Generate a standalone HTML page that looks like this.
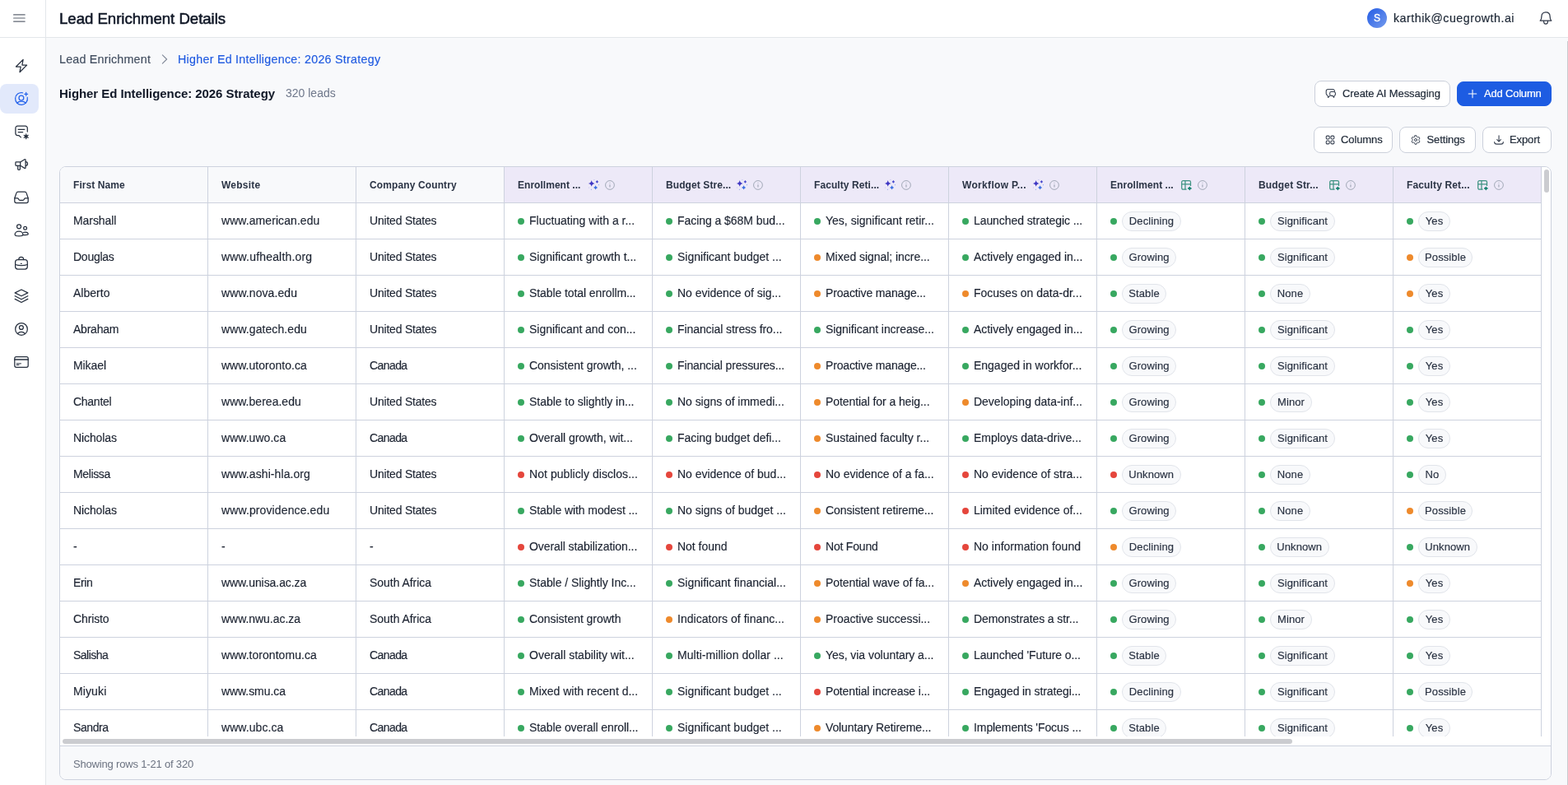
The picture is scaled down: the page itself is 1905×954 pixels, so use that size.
<!DOCTYPE html>
<html lang="en">
<head>
<meta charset="utf-8">
<title>Lead Enrichment Details</title>
<style>
*{box-sizing:border-box;margin:0;padding:0}
html,body{width:1905px;height:954px;overflow:hidden}
body{position:relative;background:#f8f9fb;font-family:"Liberation Sans",sans-serif;color:#1f2937;font-size:14px}
svg{display:block}
.sidebar,.topbar,.main{will-change:transform}
.sidebar{position:absolute;left:0;top:0;width:56px;height:954px;background:#fff;border-right:1px solid #e3e6ea;z-index:3}
.burger{position:absolute;left:0;top:0;width:55px;height:46px;border-bottom:1px solid #e3e6ea}
.burger svg{position:absolute;left:16px;top:14px}
.nav-item{position:absolute;left:0;width:47px;height:36px;border-radius:8px;display:block}
.nav-item svg{position:absolute;left:16px;top:8px}
.nav-item.active{background:#e2e9fb}
.topbar{position:absolute;left:56px;top:0;width:1849px;height:46px;background:#fff;border-bottom:1px solid #e3e6ea;z-index:2}
.topbar h1{position:absolute;left:16px;top:12px;font-size:18.6px;line-height:22px;font-weight:400;-webkit-text-stroke:0.55px #111827;color:#111827;white-space:nowrap;letter-spacing:-0.02px}
.user{position:absolute;left:1605px;top:10px;height:24px;white-space:nowrap}
.avatar{position:absolute;left:0;top:0;width:24px;height:24px;border-radius:50%;background:linear-gradient(135deg,#2b62e6 10%,#7198ec 95%);color:#fff;font-size:12px;line-height:24px;text-align:center;-webkit-text-stroke:0.35px #fff}
.email{position:absolute;left:32px;top:3px;font-size:14.2px;line-height:18px;color:#1f2937;letter-spacing:0.52px;-webkit-text-stroke:0.2px #1f2937}
.bell{position:absolute;left:1812px;top:12px}
.main{position:absolute;left:56px;top:46px;width:1849px;height:908px}
.crumbs{position:absolute;left:16px;top:16px;height:20px;white-space:nowrap;font-size:14.3px;line-height:20px}
.crumbs .c1{position:absolute;left:0;top:0;color:#414d5f;letter-spacing:0.2px;-webkit-text-stroke:0.15px #414d5f}
.crumbs svg{position:absolute;left:121px;top:3.4px}
.crumbs .c2{position:absolute;left:144px;top:0;color:#1f5ae0;letter-spacing:0.256px;-webkit-text-stroke:0.15px #1f5ae0}
.titlerow{position:absolute;left:16px;top:57px;height:22px;white-space:nowrap}
.titlerow h2{position:absolute;left:0;top:0;font-size:15px;line-height:22px;font-weight:700;color:#111827;letter-spacing:-0.06px}
.titlerow .count{position:absolute;left:275px;top:0;font-size:14px;line-height:20px;color:#6f788b}
.btn{position:absolute;height:32px;border:1px solid #cbd0db;border-radius:8px;background:#fff;font-family:inherit;font-size:13px;color:#1f2937;white-space:nowrap;text-align:left}
.btn svg{position:absolute;top:8px;left:12px}
.btn span{position:absolute;top:7px;left:33px;line-height:15px;letter-spacing:-0.1px;-webkit-text-stroke:0.2px currentColor}
.btn.primary{background:#1d5ce2;border-color:#1d5ce2;color:#fff}
.b-msg{left:1541px;top:52px;width:165px}
.b-add{left:1714px;top:53px;width:115px;height:30px}
.b-add span{left:32px;top:6px;letter-spacing:-0.2px}
.b-add svg{top:7px;left:11px}
.b-col{left:1540px;top:108px;width:96px}
.b-col span{left:32px}
.b-set{left:1644px;top:108px;width:93px}
.b-set span{left:32.5px}
.b-exp{left:1745px;top:108px;width:84px}
.b-exp span{left:32px}
.card{position:absolute;left:16px;top:156px;width:1813px;height:746px;border:1px solid #cdd2de;border-radius:8px;background:#f8f9fb;overflow:hidden}
.scroll{position:absolute;left:0;top:0;width:1811px;height:703px;background:#fff}
.view{position:absolute;left:0;top:0;width:1800px;height:692px;overflow:hidden}
table{border-collapse:separate;border-spacing:0;table-layout:fixed;width:1800px}
th,td{width:180px;height:44px;border-right:1px solid #cdd2de;border-bottom:1px solid #cdd2de;padding:13px 0 0 16px;text-align:left;vertical-align:top;white-space:nowrap;overflow:hidden;position:relative;line-height:17px}
th{background:#f8f9fb;font-size:12px;font-weight:700;color:#2b3445;padding-top:15px;line-height:15px}
th.ai{background:#ede9f8}
th svg{position:absolute}
th .i1{left:101px;top:14px}
th .i2{left:121px;top:15px}
th.tb .i1{left:101px;top:15px}
td{background:#fff;font-size:14px;color:#1c2331;-webkit-text-stroke:0.15px #1c2331}
.dot{position:absolute;left:16px;top:18px;width:8px;height:8px;border-radius:50%}
.dot.g{background:#38a860}.dot.o{background:#ee8a2c}.dot.r{background:#e5463c}
.tx{position:absolute;left:30px;top:13px;line-height:17px}
.pill{position:absolute;left:30px;top:10px;height:24px;line-height:21px;border:1px solid #e1e4ea;border-radius:12px;background:#f8f9fb;font-size:13px;color:#2b3445;text-align:center;letter-spacing:0.1px}
.w-Declining{width:72px}.w-Growing{width:66px}.w-Stable{width:54px}.w-Unknown{width:71.5px}
.w-Significant{width:79px}.w-None{width:49px}.w-Minor{width:51px}
.w-Yes{width:39px}.w-No{width:33.7px}.w-Possible{width:66px}
.vthumb{position:absolute;left:1803px;top:3px;width:6px;height:28px;border-radius:3px;background:#cbccd0}
.hthumb{position:absolute;left:3px;top:695px;width:1494px;height:6px;border-radius:3px;background:#cbccd0}
.foot{position:absolute;left:0;top:703px;width:1811px;height:41px;border-top:1px solid #cdd2de;background:#f8f9fb;padding:14px 0 0 16px;font-size:13px;line-height:15px;color:#6b7280;letter-spacing:-0.18px}
.pagescroll{position:absolute;left:1904px;top:50px;width:1px;height:904px;background:#c9cace;z-index:5}
</style>
</head>
<body>
<aside class="sidebar">
<div class="burger"><svg width="16" height="16" viewBox="0 0 16 16" fill="none" stroke="#5f6673" stroke-width="1.2" stroke-linecap="round" stroke-linejoin="round" ><path d="M.6 3.9h13.6M.6 8h13.6M.6 12.1h13.6"/></svg></div>
<nav>
<a class="nav-item" style="top:62px" title="Dashboard"><svg width="20" height="20" viewBox="0 0 20 20" fill="none" stroke="#27303f" stroke-width="1.25" stroke-linecap="round" stroke-linejoin="round" ><path d="M12.1 2.4 3.5 11H9.2L8 17.7 16.6 9.1H10.9Z"/></svg></a>
<a class="nav-item active" style="top:102px" title="Lead Enrichment"><svg width="20" height="20" viewBox="0 0 20 20" fill="none" stroke="#2563eb" stroke-width="1.25" stroke-linecap="round" stroke-linejoin="round" ><path d="M17.24 8.46A7.4 7.4 0 1 1 11.54 2.76"/><circle cx="9.9" cy="9.1" r="2.9"/><path d="M4.7 15.3C6 13.9 7.8 13.2 10 13.2S14 13.9 15.3 15.3"/><path d="M15.7 2.4V6.2M13.8 4.3H17.6"/></svg></a>
<a class="nav-item" style="top:142px" title="Messaging"><svg width="20" height="20" viewBox="0 0 20 20" fill="none" stroke="#27303f" stroke-width="1.25" stroke-linecap="round" stroke-linejoin="round" ><path d="M17.3 10.1V5.7A2.5 2.5 0 0 0 14.8 3.2H5.4A2.5 2.5 0 0 0 2.9 5.7V12A2.5 2.5 0 0 0 5.4 14.5H6.8L9.4 16.9"/><path d="M6.2 7.45H13.8M6.2 10.5H11.7"/><circle cx="15.7" cy="15.8" r="1.9" fill="#27303f" stroke="none"/><path d="M15.7 12.9V18.7M13.2 14.35 18.2 17.25M13.2 17.25 18.2 14.35" stroke-width="1.2"/></svg></a>
<a class="nav-item" style="top:182px" title="Campaigns"><svg width="20" height="20" viewBox="0 0 20 20" fill="none" stroke="#27303f" stroke-width="1.25" stroke-linecap="round" stroke-linejoin="round" ><rect x="2.9" y="6.95" width="5.8" height="4.3" rx=".8"/><path d="M8.7 6.95 13.9 3.8A.8 .8 0 0 1 15.1 4.5V13.7A.8 .8 0 0 1 13.9 14.4L8.7 11.25"/><path d="M5.7 11.25V15.6A.8 .8 0 0 0 6.5 16.4H7.6A.8 .8 0 0 0 8.4 15.6V11.25"/><path d="M15.1 6.7C18.3 6.9 18.3 11.3 15.1 11.5"/></svg></a>
<a class="nav-item" style="top:222px" title="Inbox"><svg width="20" height="20" viewBox="0 0 20 20" fill="none" stroke="#27303f" stroke-width="1.25" stroke-linecap="round" stroke-linejoin="round" ><path d="M1.8 10.8 4 4.4A2 2 0 0 1 5.9 3H14.1A2 2 0 0 1 16 4.4L18.2 10.8V14.6A2 2 0 0 1 16.2 16.6H3.8A2 2 0 0 1 1.8 14.6Z"/><path d="M1.8 10.8H5.4C6.4 10.8 6.6 13.4 8.1 13.4H11.9C13.4 13.4 13.6 10.8 14.6 10.8H18.2"/></svg></a>
<a class="nav-item" style="top:262px" title="Contacts"><svg width="20" height="20" viewBox="0 0 20 20" fill="none" stroke="#27303f" stroke-width="1.25" stroke-linecap="round" stroke-linejoin="round" ><circle cx="7.05" cy="5.3" r="2.5"/><circle cx="14.6" cy="7.15" r="1.9"/><path d="M2.1 15C2.1 12.7 4.2 11 7 11S11.9 12.7 11.9 15C11.9 16.3 9.8 16.9 7 16.9S2.1 16.3 2.1 15Z"/><path d="M12.6 12.5C13.2 12.3 13.9 12.2 14.6 12.2 16.7 12.2 18.2 13.3 18.2 14.6 18.2 15.3 17 15.7 14.7 15.7H12"/></svg></a>
<a class="nav-item" style="top:302px" title="Jobs"><svg width="20" height="20" viewBox="0 0 20 20" fill="none" stroke="#27303f" stroke-width="1.25" stroke-linecap="round" stroke-linejoin="round" ><rect x="2.6" y="5.5" width="14.7" height="11.5" rx="3"/><path d="M6.8 5.5C6.8 3.4 8 2.4 9.75 2.4S12.7 3.4 12.7 5.5"/><path d="M2.6 11.5C6.5 13.1 13.4 13.1 17.3 11.5"/><path d="M9.4 10.3H10.2"/></svg></a>
<a class="nav-item" style="top:342px" title="Layers"><svg width="20" height="20" viewBox="0 0 20 20" fill="none" stroke="#27303f" stroke-width="1.25" stroke-linecap="round" stroke-linejoin="round" ><path d="M10 2 2.2 5.9 10 9.8 17.8 5.9Z"/><path d="M2.2 9.7 10 13.8 17.8 9.7"/><path d="M2.2 13.4 10 17.5 17.8 13.4"/></svg></a>
<a class="nav-item" style="top:382px" title="Account"><svg width="20" height="20" viewBox="0 0 20 20" fill="none" stroke="#27303f" stroke-width="1.25" stroke-linecap="round" stroke-linejoin="round" ><circle cx="10" cy="9.9" r="7.35"/><circle cx="9.9" cy="8" r="2.45"/><path d="M5.4 15.5C6.5 14.1 8 13.3 9.9 13.3S13.3 14.1 14.4 15.5"/></svg></a>
<a class="nav-item" style="top:422px" title="Billing"><svg width="20" height="20" viewBox="0 0 20 20" fill="none" stroke="#27303f" stroke-width="1.25" stroke-linecap="round" stroke-linejoin="round" ><rect x="1.8" y="3.6" width="16.4" height="12.7" rx="2"/><path d="M1.8 7H18.2" stroke-width="1.7"/><path d="M4.2 11.85H9.5M4.2 13.4H7" stroke-width="1"/></svg></a>
</nav>
</aside>
<header class="topbar">
<h1>Lead Enrichment Details</h1>
<div class="user"><span class="avatar">S</span><span class="email">karthik@cuegrowth.ai</span></div>
<div class="bell"><svg width="20" height="20" viewBox="0 0 20 20" fill="none" stroke="#2f3747" stroke-width="1.25" stroke-linecap="round" stroke-linejoin="round" ><path d="M3.2 13.2C4.6 12 4.9 10.5 4.9 8 4.9 4.6 7 2.8 10 2.8S15.1 4.6 15.1 8C15.1 10.5 15.4 12 16.8 13.2Z"/><path d="M7.5 13.6C7.5 15.9 8.4 17.2 10 17.2S12.5 15.9 12.5 13.6"/></svg></div>
</header>
<main class="main">
<div class="crumbs"><span class="c1">Lead Enrichment</span><svg width="14" height="14" viewBox="0 0 14 14" fill="none" stroke="#858c9b" stroke-width="1.2" stroke-linecap="round" stroke-linejoin="round" ><path d="M4.4 1.9 9.6 7 4.4 12.1"/></svg><span class="c2">Higher Ed Intelligence: 2026 Strategy</span></div>
<div class="titlerow"><h2>Higher Ed Intelligence: 2026 Strategy</h2><span class="count">320 leads</span></div>
<button class="btn b-msg"><svg width="14" height="14" viewBox="0 0 14 14" fill="none" stroke="#3a4353" stroke-width="1.1" stroke-linecap="round" stroke-linejoin="round" ><path d="M11.4 4.3V3.8A2.3 2.3 0 0 0 9.1 1.5H3.5A2.3 2.3 0 0 0 1.2 3.8V6.8A2.3 2.3 0 0 0 3 9L3.5 11.5 5.5 9.6"/><path d="M7.4 4.55H10.6A1.8 1.8 0 0 1 12.4 6.35V7.6A1.8 1.8 0 0 1 11.2 9.3L10.6 11.4 9 9.4H7.4A1.8 1.8 0 0 1 5.65 7.6V6.35A1.8 1.8 0 0 1 7.4 4.55Z"/></svg><span>Create AI Messaging</span></button>
<button class="btn primary b-add"><svg width="14" height="14" viewBox="0 0 14 14" fill="none" stroke="#fff" stroke-width="1.05" stroke-linecap="round" stroke-linejoin="round" ><path d="M7 2.2v9.6M2.2 7h9.6"/></svg><span>Add Column</span></button>
<button class="btn b-col"><svg width="14" height="14" viewBox="0 0 14 14" fill="none" stroke="#3a4353" stroke-width="1.1" stroke-linecap="round" stroke-linejoin="round" ><rect x="2.25" y="2.15" width="3.9" height="3.9" rx="1.2"/><rect x="7.95" y="2.15" width="3.9" height="3.9" rx="1.2"/><rect x="2.25" y="7.95" width="3.9" height="3.9" rx="1.2"/><rect x="7.95" y="7.95" width="3.9" height="3.9" rx="1.2"/></svg><span>Columns</span></button>
<button class="btn b-set"><svg width="14" height="14" viewBox="0 0 24 24" fill="none" stroke="#374151" stroke-width="1.6" stroke-linecap="round" stroke-linejoin="round" ><circle cx="12" cy="12" r="2.6"/><path d="M10.3 3h3.4l.6 2.6 2 1.2 2.6-.8 1.7 3-2 1.8v2.4l2 1.8-1.7 3-2.6-.8-2 1.2-.6 2.6h-3.4l-.6-2.6-2-1.2-2.600.8-1.7-3 2-1.8v-2.4l-2-1.8 1.7-3 2.600.8 2-1.2z"/></svg><span>Settings</span></button>
<button class="btn b-exp"><svg width="14" height="14" viewBox="0 0 14 14" fill="none" stroke="#3a4353" stroke-width="1.1" stroke-linecap="round" stroke-linejoin="round" ><path d="M7.05 1.7V9M4.7 6.7 7.05 9.05 9.4 6.7"/><path d="M1.65 9.5C1.65 11.5 2.3 12.15 4.3 12.15H9.7C11.7 12.15 12.35 11.5 12.35 9.5"/></svg><span>Export</span></button>
<section class="card">
<div class="scroll">
<div class="view">
<table>
<thead>
<tr>
<th style="letter-spacing:0.06px">First Name</th>
<th style="letter-spacing:0.23px">Website</th>
<th style="letter-spacing:0.12px">Company Country</th>
<th class="ai" style="letter-spacing:0.03px">Enrollment ...<svg class="i1" width="15" height="15" viewBox="0 0 15 15" stroke="none"><path fill="#4038c4" d="M4.7 2Q5.25 5.35 8.6 5.9Q5.25 6.45 4.7 9.8Q4.15 6.45 0.8 5.9Q4.15 5.35 4.7 2Z"/><path fill="#3b6fe2" d="M9.6 8.3Q10.12 10.38 12.2 10.9Q10.12 11.42 9.6 13.5Q9.08 11.42 7 10.9Q9.08 10.38 9.6 8.3Z"/><path fill="#4545cc" d="M11.4 2.1Q11.94 3.36 13.2 3.9Q11.94 4.44 11.4 5.7Q10.86 4.44 9.6 3.9Q10.86 3.36 11.4 2.1Z"/><circle cx="7.9" cy="1.5" r=".55" fill="#b4b0ec"/><circle cx="13.5" cy="7.7" r=".6" fill="#93a9f0"/><circle cx="1.4" cy="11" r=".55" fill="#bdb9ef"/><circle cx="4.4" cy="13.3" r=".6" fill="#8fa6f0"/></svg><svg class="i2" width="14" height="14" viewBox="0 0 14 14" fill="none" stroke="#98a0af" stroke-width=".9"><circle cx="6.95" cy="6.95" r="5.4"/><path d="M6.95 6.3V9.5" stroke="#a3aab8" stroke-width="1.2"/><path d="M6.4 4.4H7.5" stroke="#a3aab8" stroke-width=".8"/></svg></th>
<th class="ai" style="letter-spacing:0.09px">Budget Stre...<svg class="i1" width="15" height="15" viewBox="0 0 15 15" stroke="none"><path fill="#4038c4" d="M4.7 2Q5.25 5.35 8.6 5.9Q5.25 6.45 4.7 9.8Q4.15 6.45 0.8 5.9Q4.15 5.35 4.7 2Z"/><path fill="#3b6fe2" d="M9.6 8.3Q10.12 10.38 12.2 10.9Q10.12 11.42 9.6 13.5Q9.08 11.42 7 10.9Q9.08 10.38 9.6 8.3Z"/><path fill="#4545cc" d="M11.4 2.1Q11.94 3.36 13.2 3.9Q11.94 4.44 11.4 5.7Q10.86 4.44 9.6 3.9Q10.86 3.36 11.4 2.1Z"/><circle cx="7.9" cy="1.5" r=".55" fill="#b4b0ec"/><circle cx="13.5" cy="7.7" r=".6" fill="#93a9f0"/><circle cx="1.4" cy="11" r=".55" fill="#bdb9ef"/><circle cx="4.4" cy="13.3" r=".6" fill="#8fa6f0"/></svg><svg class="i2" width="14" height="14" viewBox="0 0 14 14" fill="none" stroke="#98a0af" stroke-width=".9"><circle cx="6.95" cy="6.95" r="5.4"/><path d="M6.95 6.3V9.5" stroke="#a3aab8" stroke-width="1.2"/><path d="M6.4 4.4H7.5" stroke="#a3aab8" stroke-width=".8"/></svg></th>
<th class="ai" style="letter-spacing:0.08px">Faculty Reti...<svg class="i1" width="15" height="15" viewBox="0 0 15 15" stroke="none"><path fill="#4038c4" d="M4.7 2Q5.25 5.35 8.6 5.9Q5.25 6.45 4.7 9.8Q4.15 6.45 0.8 5.9Q4.15 5.35 4.7 2Z"/><path fill="#3b6fe2" d="M9.6 8.3Q10.12 10.38 12.2 10.9Q10.12 11.42 9.6 13.5Q9.08 11.42 7 10.9Q9.08 10.38 9.6 8.3Z"/><path fill="#4545cc" d="M11.4 2.1Q11.94 3.36 13.2 3.9Q11.94 4.44 11.4 5.7Q10.86 4.44 9.6 3.9Q10.86 3.36 11.4 2.1Z"/><circle cx="7.9" cy="1.5" r=".55" fill="#b4b0ec"/><circle cx="13.5" cy="7.7" r=".6" fill="#93a9f0"/><circle cx="1.4" cy="11" r=".55" fill="#bdb9ef"/><circle cx="4.4" cy="13.3" r=".6" fill="#8fa6f0"/></svg><svg class="i2" width="14" height="14" viewBox="0 0 14 14" fill="none" stroke="#98a0af" stroke-width=".9"><circle cx="6.95" cy="6.95" r="5.4"/><path d="M6.95 6.3V9.5" stroke="#a3aab8" stroke-width="1.2"/><path d="M6.4 4.4H7.5" stroke="#a3aab8" stroke-width=".8"/></svg></th>
<th class="ai" style="letter-spacing:0.33px">Workflow P...<svg class="i1" width="15" height="15" viewBox="0 0 15 15" stroke="none"><path fill="#4038c4" d="M4.7 2Q5.25 5.35 8.6 5.9Q5.25 6.45 4.7 9.8Q4.15 6.45 0.8 5.9Q4.15 5.35 4.7 2Z"/><path fill="#3b6fe2" d="M9.6 8.3Q10.12 10.38 12.2 10.9Q10.12 11.42 9.6 13.5Q9.08 11.42 7 10.9Q9.08 10.38 9.6 8.3Z"/><path fill="#4545cc" d="M11.4 2.1Q11.94 3.36 13.2 3.9Q11.94 4.44 11.4 5.7Q10.86 4.44 9.6 3.9Q10.86 3.36 11.4 2.1Z"/><circle cx="7.9" cy="1.5" r=".55" fill="#b4b0ec"/><circle cx="13.5" cy="7.7" r=".6" fill="#93a9f0"/><circle cx="1.4" cy="11" r=".55" fill="#bdb9ef"/><circle cx="4.4" cy="13.3" r=".6" fill="#8fa6f0"/></svg><svg class="i2" width="14" height="14" viewBox="0 0 14 14" fill="none" stroke="#98a0af" stroke-width=".9"><circle cx="6.95" cy="6.95" r="5.4"/><path d="M6.95 6.3V9.5" stroke="#a3aab8" stroke-width="1.2"/><path d="M6.4 4.4H7.5" stroke="#a3aab8" stroke-width=".8"/></svg></th>
<th class="ai tb" style="letter-spacing:0.05px">Enrollment ...<svg class="i1" width="15" height="15" viewBox="0 0 15 15" fill="none" stroke="#3f9382" stroke-width="1.25" stroke-linejoin="round"><path d="M7.6 12.2H3.3A1.6 1.6 0 0 1 1.7 10.6V3.2A1.6 1.6 0 0 1 3.3 1.6H10.9A1.6 1.6 0 0 1 12.5 3.2V8"/><path d="M1.7 5.75H12.5M5.95 1.6V12.2"/><path d="M11.35 9.5V12.3M9.85 10.9H12.85" stroke="#12806c" stroke-width="1.7" stroke-linecap="round"/></svg><svg class="i2" width="14" height="14" viewBox="0 0 14 14" fill="none" stroke="#98a0af" stroke-width=".9"><circle cx="6.95" cy="6.95" r="5.4"/><path d="M6.95 6.3V9.5" stroke="#a3aab8" stroke-width="1.2"/><path d="M6.4 4.4H7.5" stroke="#a3aab8" stroke-width=".8"/></svg></th>
<th class="ai tb" style="letter-spacing:0.16px">Budget Str...<svg class="i1" width="15" height="15" viewBox="0 0 15 15" fill="none" stroke="#3f9382" stroke-width="1.25" stroke-linejoin="round"><path d="M7.6 12.2H3.3A1.6 1.6 0 0 1 1.7 10.6V3.2A1.6 1.6 0 0 1 3.3 1.6H10.9A1.6 1.6 0 0 1 12.5 3.2V8"/><path d="M1.7 5.75H12.5M5.95 1.6V12.2"/><path d="M11.35 9.5V12.3M9.85 10.9H12.85" stroke="#12806c" stroke-width="1.7" stroke-linecap="round"/></svg><svg class="i2" width="14" height="14" viewBox="0 0 14 14" fill="none" stroke="#98a0af" stroke-width=".9"><circle cx="6.95" cy="6.95" r="5.4"/><path d="M6.95 6.3V9.5" stroke="#a3aab8" stroke-width="1.2"/><path d="M6.4 4.4H7.5" stroke="#a3aab8" stroke-width=".8"/></svg></th>
<th class="ai tb" style="letter-spacing:0.14px">Faculty Ret...<svg class="i1" width="15" height="15" viewBox="0 0 15 15" fill="none" stroke="#3f9382" stroke-width="1.25" stroke-linejoin="round"><path d="M7.6 12.2H3.3A1.6 1.6 0 0 1 1.7 10.6V3.2A1.6 1.6 0 0 1 3.3 1.6H10.9A1.6 1.6 0 0 1 12.5 3.2V8"/><path d="M1.7 5.75H12.5M5.95 1.6V12.2"/><path d="M11.35 9.5V12.3M9.85 10.9H12.85" stroke="#12806c" stroke-width="1.7" stroke-linecap="round"/></svg><svg class="i2" width="14" height="14" viewBox="0 0 14 14" fill="none" stroke="#98a0af" stroke-width=".9"><circle cx="6.95" cy="6.95" r="5.4"/><path d="M6.95 6.3V9.5" stroke="#a3aab8" stroke-width="1.2"/><path d="M6.4 4.4H7.5" stroke="#a3aab8" stroke-width=".8"/></svg></th>
</tr>
</thead>
<tbody>
<tr><td style="letter-spacing:-0.076px">Marshall</td><td style="letter-spacing:0.073px">www.american.edu</td><td style="letter-spacing:-0.207px">United States</td><td><i class="dot g"></i><span class="tx" style="letter-spacing:-0.016px">Fluctuating with a r...</span></td><td><i class="dot g"></i><span class="tx" style="letter-spacing:-0.053px">Facing a $68M bud...</span></td><td><i class="dot g"></i><span class="tx" style="letter-spacing:0.007px">Yes, significant retir...</span></td><td><i class="dot g"></i><span class="tx" style="letter-spacing:-0.082px">Launched strategic ...</span></td><td><i class="dot g"></i><span class="pill w-Declining">Declining</span></td><td><i class="dot g"></i><span class="pill w-Significant">Significant</span></td><td><i class="dot g"></i><span class="pill w-Yes">Yes</span></td></tr>
<tr><td style="letter-spacing:-0.252px">Douglas</td><td style="letter-spacing:0.182px">www.ufhealth.org</td><td style="letter-spacing:-0.207px">United States</td><td><i class="dot g"></i><span class="tx" style="letter-spacing:0.013px">Significant growth t...</span></td><td><i class="dot g"></i><span class="tx" style="letter-spacing:-0.01px">Significant budget ...</span></td><td><i class="dot o"></i><span class="tx" style="letter-spacing:-0.041px">Mixed signal; incre...</span></td><td><i class="dot g"></i><span class="tx" style="letter-spacing:-0.035px">Actively engaged in...</span></td><td><i class="dot g"></i><span class="pill w-Growing">Growing</span></td><td><i class="dot g"></i><span class="pill w-Significant">Significant</span></td><td><i class="dot o"></i><span class="pill w-Possible">Possible</span></td></tr>
<tr><td style="letter-spacing:0.017px">Alberto</td><td style="letter-spacing:0.079px">www.nova.edu</td><td style="letter-spacing:-0.207px">United States</td><td><i class="dot g"></i><span class="tx" style="letter-spacing:-0.092px">Stable total enrollm...</span></td><td><i class="dot g"></i><span class="tx" style="letter-spacing:-0.039px">No evidence of sig...</span></td><td><i class="dot o"></i><span class="tx" style="letter-spacing:-0.144px">Proactive manage...</span></td><td><i class="dot o"></i><span class="tx">Focuses on data-dr...</span></td><td><i class="dot g"></i><span class="pill w-Stable">Stable</span></td><td><i class="dot g"></i><span class="pill w-None">None</span></td><td><i class="dot o"></i><span class="pill w-Yes">Yes</span></td></tr>
<tr><td style="letter-spacing:-0.235px">Abraham</td><td style="letter-spacing:0.082px">www.gatech.edu</td><td style="letter-spacing:-0.207px">United States</td><td><i class="dot g"></i><span class="tx" style="letter-spacing:-0.031px">Significant and con...</span></td><td><i class="dot g"></i><span class="tx" style="letter-spacing:-0.083px">Financial stress fro...</span></td><td><i class="dot g"></i><span class="tx" style="letter-spacing:-0.055px">Significant increase...</span></td><td><i class="dot g"></i><span class="tx" style="letter-spacing:-0.035px">Actively engaged in...</span></td><td><i class="dot g"></i><span class="pill w-Growing">Growing</span></td><td><i class="dot g"></i><span class="pill w-Significant">Significant</span></td><td><i class="dot g"></i><span class="pill w-Yes">Yes</span></td></tr>
<tr><td style="letter-spacing:-0.086px">Mikael</td><td style="letter-spacing:0.014px">www.utoronto.ca</td><td style="letter-spacing:-0.582px">Canada</td><td><i class="dot g"></i><span class="tx" style="letter-spacing:-0.034px">Consistent growth, ...</span></td><td><i class="dot g"></i><span class="tx" style="letter-spacing:-0.143px">Financial pressures...</span></td><td><i class="dot o"></i><span class="tx" style="letter-spacing:-0.144px">Proactive manage...</span></td><td><i class="dot g"></i><span class="tx" style="letter-spacing:-0.012px">Engaged in workfor...</span></td><td><i class="dot g"></i><span class="pill w-Growing">Growing</span></td><td><i class="dot g"></i><span class="pill w-Significant">Significant</span></td><td><i class="dot g"></i><span class="pill w-Yes">Yes</span></td></tr>
<tr><td style="letter-spacing:-0.272px">Chantel</td><td style="letter-spacing:0.022px">www.berea.edu</td><td style="letter-spacing:-0.207px">United States</td><td><i class="dot g"></i><span class="tx" style="letter-spacing:-0.04px">Stable to slightly in...</span></td><td><i class="dot g"></i><span class="tx" style="letter-spacing:-0.047px">No signs of immedi...</span></td><td><i class="dot o"></i><span class="tx" style="letter-spacing:-0.085px">Potential for a heig...</span></td><td><i class="dot o"></i><span class="tx" style="letter-spacing:-0.014px">Developing data-inf...</span></td><td><i class="dot g"></i><span class="pill w-Growing">Growing</span></td><td><i class="dot g"></i><span class="pill w-Minor">Minor</span></td><td><i class="dot g"></i><span class="pill w-Yes">Yes</span></td></tr>
<tr><td style="letter-spacing:-0.097px">Nicholas</td><td style="letter-spacing:0.044px">www.uwo.ca</td><td style="letter-spacing:-0.582px">Canada</td><td><i class="dot g"></i><span class="tx" style="letter-spacing:-0.041px">Overall growth, wit...</span></td><td><i class="dot g"></i><span class="tx" style="letter-spacing:-0.048px">Facing budget defi...</span></td><td><i class="dot o"></i><span class="tx" style="letter-spacing:0.006px">Sustained faculty r...</span></td><td><i class="dot g"></i><span class="tx" style="letter-spacing:-0.031px">Employs data-drive...</span></td><td><i class="dot g"></i><span class="pill w-Growing">Growing</span></td><td><i class="dot g"></i><span class="pill w-Significant">Significant</span></td><td><i class="dot g"></i><span class="pill w-Yes">Yes</span></td></tr>
<tr><td style="letter-spacing:-0.367px">Melissa</td><td style="letter-spacing:0.087px">www.ashi-hla.org</td><td style="letter-spacing:-0.207px">United States</td><td><i class="dot r"></i><span class="tx" style="letter-spacing:0.056px">Not publicly disclos...</span></td><td><i class="dot r"></i><span class="tx" style="letter-spacing:-0.014px">No evidence of bud...</span></td><td><i class="dot r"></i><span class="tx" style="letter-spacing:-0.037px">No evidence of a fa...</span></td><td><i class="dot r"></i><span class="tx" style="letter-spacing:-0.014px">No evidence of stra...</span></td><td><i class="dot r"></i><span class="pill w-Unknown">Unknown</span></td><td><i class="dot g"></i><span class="pill w-None">None</span></td><td><i class="dot g"></i><span class="pill w-No">No</span></td></tr>
<tr><td style="letter-spacing:-0.097px">Nicholas</td><td style="letter-spacing:0.117px">www.providence.edu</td><td style="letter-spacing:-0.207px">United States</td><td><i class="dot g"></i><span class="tx" style="letter-spacing:-0.087px">Stable with modest ...</span></td><td><i class="dot g"></i><span class="tx" style="letter-spacing:-0.014px">No signs of budget ...</span></td><td><i class="dot o"></i><span class="tx" style="letter-spacing:-0.084px">Consistent retireme...</span></td><td><i class="dot r"></i><span class="tx" style="letter-spacing:-0.014px">Limited evidence of...</span></td><td><i class="dot g"></i><span class="pill w-Growing">Growing</span></td><td><i class="dot g"></i><span class="pill w-None">None</span></td><td><i class="dot o"></i><span class="pill w-Possible">Possible</span></td></tr>
<tr><td>-</td><td>-</td><td>-</td><td><i class="dot r"></i><span class="tx" style="letter-spacing:-0.077px">Overall stabilization...</span></td><td><i class="dot r"></i><span class="tx" style="letter-spacing:-0.02px">Not found</span></td><td><i class="dot r"></i><span class="tx" style="letter-spacing:-0.201px">Not Found</span></td><td><i class="dot r"></i><span class="tx">No information found</span></td><td><i class="dot o"></i><span class="pill w-Declining">Declining</span></td><td><i class="dot g"></i><span class="pill w-Unknown">Unknown</span></td><td><i class="dot g"></i><span class="pill w-Unknown">Unknown</span></td></tr>
<tr><td style="letter-spacing:-0.387px">Erin</td><td style="letter-spacing:-0.067px">www.unisa.ac.za</td><td style="letter-spacing:-0.039px">South Africa</td><td><i class="dot g"></i><span class="tx" style="letter-spacing:-0.045px">Stable / Slightly Inc...</span></td><td><i class="dot g"></i><span class="tx" style="letter-spacing:0.014px">Significant financial...</span></td><td><i class="dot o"></i><span class="tx" style="letter-spacing:-0.083px">Potential wave of fa...</span></td><td><i class="dot o"></i><span class="tx" style="letter-spacing:-0.035px">Actively engaged in...</span></td><td><i class="dot g"></i><span class="pill w-Growing">Growing</span></td><td><i class="dot g"></i><span class="pill w-Significant">Significant</span></td><td><i class="dot o"></i><span class="pill w-Yes">Yes</span></td></tr>
<tr><td style="letter-spacing:-0.125px">Christo</td><td style="letter-spacing:-0.038px">www.nwu.ac.za</td><td style="letter-spacing:-0.039px">South Africa</td><td><i class="dot g"></i><span class="tx" style="letter-spacing:-0.038px">Consistent growth</span></td><td><i class="dot o"></i><span class="tx" style="letter-spacing:0.037px">Indicators of financ...</span></td><td><i class="dot o"></i><span class="tx" style="letter-spacing:-0.025px">Proactive successi...</span></td><td><i class="dot g"></i><span class="tx" style="letter-spacing:-0.091px">Demonstrates a str...</span></td><td><i class="dot g"></i><span class="pill w-Growing">Growing</span></td><td><i class="dot g"></i><span class="pill w-Minor">Minor</span></td><td><i class="dot g"></i><span class="pill w-Yes">Yes</span></td></tr>
<tr><td style="letter-spacing:-0.505px">Salisha</td><td style="letter-spacing:0.036px">www.torontomu.ca</td><td style="letter-spacing:-0.582px">Canada</td><td><i class="dot g"></i><span class="tx">Overall stability wit...</span></td><td><i class="dot g"></i><span class="tx" style="letter-spacing:0.048px">Multi-million dollar ...</span></td><td><i class="dot g"></i><span class="tx" style="letter-spacing:-0.052px">Yes, via voluntary a...</span></td><td><i class="dot g"></i><span class="tx" style="letter-spacing:-0.1px">Launched 'Future o...</span></td><td><i class="dot g"></i><span class="pill w-Stable">Stable</span></td><td><i class="dot g"></i><span class="pill w-Significant">Significant</span></td><td><i class="dot g"></i><span class="pill w-Yes">Yes</span></td></tr>
<tr><td style="letter-spacing:0.114px">Miyuki</td><td style="letter-spacing:-0.067px">www.smu.ca</td><td style="letter-spacing:-0.582px">Canada</td><td><i class="dot g"></i><span class="tx" style="letter-spacing:-0.01px">Mixed with recent d...</span></td><td><i class="dot g"></i><span class="tx" style="letter-spacing:-0.01px">Significant budget ...</span></td><td><i class="dot r"></i><span class="tx" style="letter-spacing:-0.133px">Potential increase i...</span></td><td><i class="dot g"></i><span class="tx" style="letter-spacing:-0.104px">Engaged in strategi...</span></td><td><i class="dot g"></i><span class="pill w-Declining">Declining</span></td><td><i class="dot g"></i><span class="pill w-Significant">Significant</span></td><td><i class="dot g"></i><span class="pill w-Possible">Possible</span></td></tr>
<tr><td style="letter-spacing:-0.406px">Sandra</td><td style="letter-spacing:0.063px">www.ubc.ca</td><td style="letter-spacing:-0.582px">Canada</td><td><i class="dot g"></i><span class="tx" style="letter-spacing:-0.096px">Stable overall enroll...</span></td><td><i class="dot g"></i><span class="tx" style="letter-spacing:-0.01px">Significant budget ...</span></td><td><i class="dot o"></i><span class="tx" style="letter-spacing:-0.118px">Voluntary Retireme...</span></td><td><i class="dot g"></i><span class="tx" style="letter-spacing:-0.081px">Implements 'Focus ...</span></td><td><i class="dot g"></i><span class="pill w-Stable">Stable</span></td><td><i class="dot g"></i><span class="pill w-Significant">Significant</span></td><td><i class="dot g"></i><span class="pill w-Yes">Yes</span></td></tr>
</tbody>
</table>
</div>
</div>
<div class="vthumb"></div>
<div class="hthumb"></div>
<div class="foot">Showing rows 1-21 of 320</div>
</section>
</main>
<div class="pagescroll"></div>
</body>
</html>
